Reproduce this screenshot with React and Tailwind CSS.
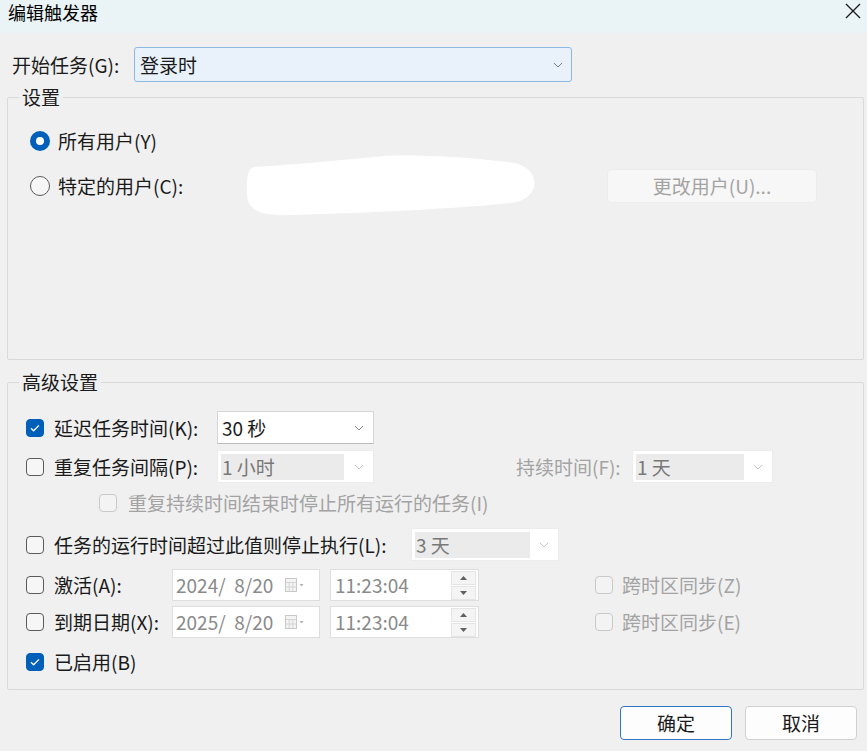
import React from "react";
import clsx from "clsx";

const Chevron = ({ color = "#8a8a8a" }) => (
  <svg width="10" height="6" viewBox="0 0 10 6">
    <path d="M1 1l4 4 4-4" fill="none" stroke={color} strokeWidth="1" />
  </svg>
);

const Check = ({ checked, disabled }) => (
  <span
    className={clsx(
      "flex h-[18px] w-[18px] shrink-0 items-center justify-center rounded-[4px] border",
      checked
        ? "border-[#005fb8] bg-[#005fb8]"
        : disabled
        ? "border-[#c9c9c9] bg-[#f3f3f3]"
        : "border-[#5b5b5b] bg-[#f6f6f6]"
    )}
  >
    {checked && (
      <svg width="12" height="10" viewBox="0 0 12 10">
        <path d="M2 5.2l2.6 2.6L10 2.4" fill="none" stroke="#fff" strokeWidth="1.3" />
      </svg>
    )}
  </span>
);

const Radio = ({ checked }) =>
  checked ? (
    <span className="flex h-[20px] w-[20px] shrink-0 items-center justify-center rounded-full bg-[#005fb8]">
      <span className="h-[8px] w-[8px] rounded-full bg-white" />
    </span>
  ) : (
    <span className="h-[20px] w-[20px] shrink-0 rounded-full border border-[#5b5b5b] bg-[#f6f6f6]" />
  );

// combo box; disabled ones keep a grey field inside the white frame
const Combo = ({ value, className, inner, disabled }) => (
  <div
    className={clsx(
      "flex h-[33px] items-center border bg-white pr-[9px]",
      disabled ? "border-[#ececec]" : "border-[#d6d6d6] border-b-[#bdbdbd]",
      className
    )}
  >
    {disabled ? (
      <div className={clsx("ml-[3px] flex h-[26px] items-center bg-[#ebebeb] pl-[1px] text-[#787878]", inner)}>
        {value}
      </div>
    ) : (
      <div className="pl-[4px]">{value}</div>
    )}
    <div className="ml-auto">
      <Chevron color={disabled ? "#c4c4c4" : "#8a8a8a"} />
    </div>
  </div>
);

const DateBox = ({ value }) => (
  <div className="flex h-[32px] w-[148px] items-center border border-[#dedede] bg-white pl-[3px] text-[#8a8a8a]">
    <span className="whitespace-pre">{value}</span>
    <svg className="ml-auto mr-[14px]" width="20" height="14" viewBox="0 0 20 14">
      <rect x="0.5" y="0.5" width="11" height="13" fill="#f4f4f4" stroke="#c8c8c8" />
      <path d="M0.5 4.5h11M0.5 9h11M4.2 4.5v9M7.8 4.5v9" stroke="#d4d4d4" />
      <path d="M14.5 6h4l-2 2.5z" fill="#b0b0b0" />
    </svg>
  </div>
);

const Spin = () => (
  <div className="mr-[2px] flex w-[25px] flex-col gap-[1px]">
    <div className="flex h-[14px] items-center justify-center border border-[#e4e4e4] bg-[#f4f4f4]">
      <svg width="7" height="4" viewBox="0 0 7 4"><path d="M0 4l3.5-4 3.5 4z" fill="#606060" /></svg>
    </div>
    <div className="flex h-[14px] items-center justify-center border border-[#e4e4e4] bg-[#f4f4f4]">
      <svg width="7" height="4" viewBox="0 0 7 4"><path d="M0 0l3.5 4 3.5-4z" fill="#606060" /></svg>
    </div>
  </div>
);

const TimeBox = ({ value }) => (
  <div className="ml-[10px] flex h-[32px] w-[149px] items-center border border-[#dedede] bg-white pl-[4px] text-[#8a8a8a]">
    <span>{value}</span>
    <div className="ml-auto">
      <Spin />
    </div>
  </div>
);

const Label = ({ children, className }) => (
  <span className={clsx("shrink-0 whitespace-nowrap", className)}>{children}</span>
);

export default function App() {
  return (
    <div className="h-[751px] w-[867px] overflow-hidden bg-[#f0f0f0] font-['Microsoft_YaHei_UI','Noto_Sans_CJK_SC',sans-serif] text-[19px] leading-[24px] text-[#1a1a1a]">
      {/* title bar */}
      <div className="flex h-[33px] items-start justify-between bg-[#eaf3f6] pl-[8px] pr-[6px]">
        <span className="pt-[1px] text-[18px] leading-[22px] text-black">编辑触发器</span>
        <svg className="mt-[3px]" width="16" height="16" viewBox="0 0 16 16">
          <path d="M1 1l14 14M15 1L1 15" stroke="#1a1a1a" strokeWidth="1.3" />
        </svg>
      </div>

      {/* start task */}
      <div className="mt-[14px] flex h-[35px] items-center pl-[12px]">
        <Label className="w-[122px]">开始任务(G):</Label>
        <div className="flex h-[35px] w-[438px] items-center rounded-[3px] border border-[#8cb8e4] bg-[#e9f2fb] pl-[5px] pr-[8px]">
          <span>登录时</span>
          <div className="ml-auto">
            <Chevron color="#7a7a7a" />
          </div>
        </div>
      </div>

      {/* settings group */}
      <fieldset className="ml-[7px] mt-[3px] h-[275px] w-[857px] rounded-[2px] border border-[#d9d9d9]">
        <legend className="ml-[11px] px-[3px] leading-[24px]">设置</legend>
        <div className="mt-[18px] flex h-[28px] items-center gap-[8px] pl-[22px]">
          <Radio checked />
          <Label>所有用户(Y)</Label>
        </div>
        <div className="mt-[14px] flex h-[34px] items-center pl-[22px]">
          <Radio />
          <Label className="ml-[8px] w-[187px]">特定的用户(C):</Label>
          <svg className="-my-[14px] shrink-0" width="300" height="62" viewBox="0 0 300 62">
            <path
              d="M10 12C40 10 90 6 138 1C190 -1 235 4 262 7C298 10 298 44 266 48C210 54 120 58 50 60C20 61 3 58 2 40C1 22 3 13 10 12Z"
              fill="#ffffff"
            />
          </svg>
          <button className="ml-[62px] flex h-[34px] w-[210px] items-center justify-center rounded-[4px] border border-[#ececec] bg-[#f7f7f7] text-[#a3a3a3]">
            更改用户(U)...
          </button>
        </div>
      </fieldset>

      {/* advanced group */}
      <fieldset className="ml-[7px] mt-[10px] h-[320px] w-[857px] rounded-[2px] border border-[#d9d9d9]">
        <legend className="ml-[11px] px-[3px] leading-[24px]">高级设置</legend>

        <div className="mt-[17px] flex h-[33px] items-center pl-[18px]">
          <Check checked />
          <Label className="ml-[10px] w-[163px]">延迟任务时间(K):</Label>
          <Combo value="30 秒" className="w-[157px]" />
        </div>

        <div className="mt-[6px] flex h-[33px] items-center pl-[18px]">
          <Check />
          <Label className="ml-[10px] w-[163px]">重复任务间隔(P):</Label>
          <Combo value="1 小时" className="w-[157px]" inner="w-[123px]" disabled />
          <Label className="ml-[142px] w-[116px] text-[#a3a3a3]">持续时间(F):</Label>
          <Combo value="1 天" className="w-[141px]" inner="w-[108px]" disabled />
        </div>

        <div className="mt-[9px] flex h-[22px] items-center pl-[91px]">
          <Check disabled />
          <Label className="ml-[11px] text-[#a3a3a3]">重复持续时间结束时停止所有运行的任务(I)</Label>
        </div>

        <div className="mt-[14px] flex h-[33px] items-center pl-[18px]">
          <Check />
          <Label className="ml-[10px] w-[357px]">任务的运行时间超过此值则停止执行(L):</Label>
          <Combo value="3 天" className="w-[148px]" inner="w-[115px]" disabled />
        </div>

        <div className="mt-[8px] flex h-[32px] items-center pl-[18px]">
          <Check />
          <Label className="ml-[10px] w-[118px]">激活(A):</Label>
          <DateBox value="2024/  8/20" />
          <TimeBox value="11:23:04" />
          <div className="ml-[116px]">
            <Check disabled />
          </div>
          <Label className="ml-[9px] text-[#a3a3a3]">跨时区同步(Z)</Label>
        </div>

        <div className="mt-[5px] flex h-[32px] items-center pl-[18px]">
          <Check />
          <Label className="ml-[10px] w-[118px]">到期日期(X):</Label>
          <DateBox value="2025/  8/20" />
          <TimeBox value="11:23:04" />
          <div className="ml-[116px]">
            <Check disabled />
          </div>
          <Label className="ml-[9px] text-[#a3a3a3]">跨时区同步(E)</Label>
        </div>

        <div className="mt-[12px] flex h-[24px] items-center pl-[18px]">
          <Check checked />
          <Label className="ml-[10px]">已启用(B)</Label>
        </div>
      </fieldset>

      {/* dialog buttons */}
      <div className="mt-[16px] flex justify-end gap-[13px] pr-[10px]">
        <button className="h-[34px] w-[112px] rounded-[4px] border-[1.5px] border-[#2f76c6] bg-[#fdfdfd]">确定</button>
        <button className="h-[34px] w-[112px] rounded-[4px] border border-[#d0d0d0] bg-[#fdfdfd]">取消</button>
      </div>
    </div>
  );
}
